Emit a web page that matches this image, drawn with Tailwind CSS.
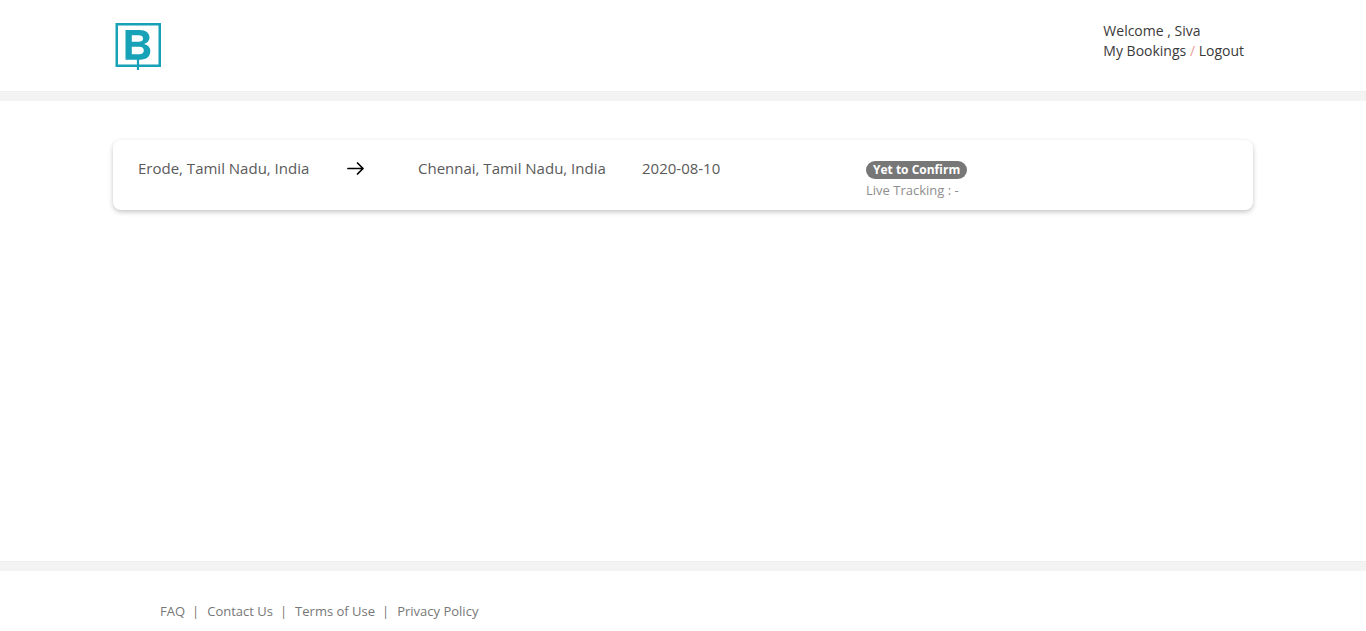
<!DOCTYPE html>
<html lang="en">
<head>
<meta charset="utf-8">
<meta name="viewport" content="width=device-width, initial-scale=1">
<title>My Bookings</title>
<script src="https://cdn.jsdelivr.net/npm/@tailwindcss/browser@4"></script>
</head>
<body class="flex min-h-screen flex-col bg-white font-['Open_Sans',sans-serif] text-sm text-[#3a3a3a]">
<header>
  <div class="mx-auto flex max-w-[1140px] items-start justify-between pt-[21px] pr-[9px] pb-5">
    <a href="#" aria-label="Home" class="block">
      <svg class="h-[50px] w-[50px]" viewBox="0 0 50 50" fill="none" stroke="#17a2b8">
        <path d="M3.750 3.250H46.750V44.750H3.750Z" stroke-width="2.500"/>
        <path d="M25 37V49" stroke-width="2.200"/>
        <path d="M12.500 9H26.500C33 9 36.500 12 36.500 16.500C36.500 20 34 22 31 23C35 24 37.300 26.500 37.300 30C37.300 35.500 33.500 38.700 27 38.700H12.500ZM18.800 14.300V20.800H25.500C28.500 20.800 30 19.800 30 17.500S28.500 14.300 25.500 14.300ZM18.800 25.700V33.200H26C29.500 33.200 30.800 31.900 30.800 29.500S29.500 25.700 26 25.700Z" fill="#17a2b8" fill-rule="evenodd" stroke="none"/>
      </svg>
    </a>
    <div class="leading-5">
      <p>Welcome , Siva</p>
      <nav aria-label="Account"><a href="#">My Bookings</a> <span class="text-[#f09a9a]">/</span> <a href="#">Logout</a></nav>
    </div>
  </div>
  <div class="h-2.5 border-t border-[#eee] bg-[#f3f3f3]"></div>
</header>
<main class="mx-auto w-full max-w-[1140px] flex-1 pt-[39px]">
  <article class="grid grid-cols-[209fr_71fr_224fr_224fr_362fr] rounded-lg px-[25px] pt-[17px] pb-2 text-[15px] leading-[22px] text-[#5a5a5a] shadow-[0_2px_5px_rgba(0,0,0,0.23)]">
    <p class="whitespace-nowrap">Erode, Tamil Nadu, India</p>
    <svg class="mt-1 h-4 w-[18px]" viewBox="0 0 18 16" fill="none" stroke="#000" stroke-width="1.700" stroke-linecap="round" stroke-linejoin="round" role="img" aria-label="to"><path d="M1 7.500H16M10.500 2L16 7.500L10.500 13"/></svg>
    <p class="whitespace-nowrap">Chennai, Tamil Nadu, India</p>
    <time datetime="2020-08-10">2020-08-10</time>
    <div class="flex flex-col items-start pt-1">
      <span class="rounded-full bg-[#777] px-[7px] text-xs leading-[18px] font-bold text-white">Yet to Confirm</span>
      <p class="text-[13px] leading-[23px] text-[#8e8e8e]">Live Tracking : -</p>
    </div>
  </article>
</main>
<footer>
  <div class="h-2.5 border-t border-[#eee] bg-[#f3f3f3]"></div>
  <div class="mx-auto max-w-[1140px] px-[47px] pt-[30px] pb-2.5">
    <nav aria-label="Footer" class="flex gap-[7px] text-[13px] leading-5 text-[#777]">
      <a href="#">FAQ</a><span class="pr-px">|</span>
      <a href="#">Contact Us</a><span class="pr-px">|</span>
      <a href="#">Terms of Use</a><span class="pr-px">|</span>
      <a href="#">Privacy Policy</a>
    </nav>
  </div>
</footer>
</body>
</html>
